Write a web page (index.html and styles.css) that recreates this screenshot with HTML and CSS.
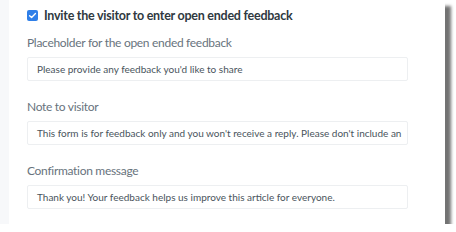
FILE: index.html
```html
<!DOCTYPE html>
<html lang="en">
<head>
  <meta charset="UTF-8" />
  <title>Feedback settings</title>
  <link rel="stylesheet" href="styles.css">
</head>
<body>

  <!-- Settings panel with the drop shadow -->
  <div class="panel">
    <div class="strip"></div>
    <div class="content">

      <!-- Checkbox row -->
      <label class="check-row">
        <span class="checkbox">
          <svg width="9" height="9" viewBox="0 0 10 10">
            <path d="M1.8 5.2 L4 7.3 L8.3 2.7" fill="none" stroke="white" stroke-width="1.5" stroke-linecap="round" stroke-linejoin="round"/>
          </svg>
        </span>
        <span class="check-text">Invite the visitor to enter open ended feedback</span>
      </label>

      <!-- Placeholder field -->
      <div class="field first">
        <div class="field-label">Placeholder for the open ended feedback</div>
        <div class="input">Please provide any feedback you'd like to share</div>
      </div>

      <!-- Note field -->
      <div class="field">
        <div class="field-label">Note to visitor</div>
        <div class="input">This form is for feedback only and you won't receive a reply. Please don't include an</div>
      </div>

      <!-- Confirmation field -->
      <div class="field">
        <div class="field-label">Confirmation message</div>
        <div class="input">Thank you! Your feedback helps us improve this article for everyone.</div>
      </div>

    </div>
  </div>

</body>
</html>
```

FILE: styles.css
```css
/* Page */
body {
  margin: 0;
  padding: 0;
  background-color: white;
  font-family: Lato, "Open Sans", sans-serif;
}

/* The white panel with a shadow bottom right */
.panel {
  width: 445px;
  height: 224px;
  display: flex;
  background-color: white;
  box-shadow: 6px 6px 3px rgba(0, 0, 0, 0.55);
}

/* Light strip down the left side */
.strip {
  width: 9px;
  background-color: #f7f8fa;
}

.content {
  padding: 6px 0 0 18px;
}

/* Checkbox row */
.check-row {
  display: flex;
  align-items: center;
  height: 18px;
}

.checkbox {
  width: 11px;
  height: 11px;
  border-radius: 2px;
  background-color: #2f7fe8;
  display: flex;
  align-items: center;
  justify-content: center;
}

.check-text {
  margin-left: 6px;
  font-size: 12.5px;
  font-weight: bold;
  color: #2f3941;
  letter-spacing: -0.25px;
}

/* Form fields */
.field {
  margin-top: 17px;
}

.field.first {
  margin-top: 10px;
}

.field-label {
  font-size: 12px;
  letter-spacing: -0.3px;
  line-height: 18px;
  color: #68737d;
  margin-bottom: 5px;
}

.input {
  width: 370px;
  height: 22px;
  line-height: 22px;
  padding-left: 9px;
  border: 1px solid #edeff1;
  border-radius: 2px;
  font-size: 10px;
  color: #49545c;
  white-space: nowrap;
  overflow: hidden;
}
```
